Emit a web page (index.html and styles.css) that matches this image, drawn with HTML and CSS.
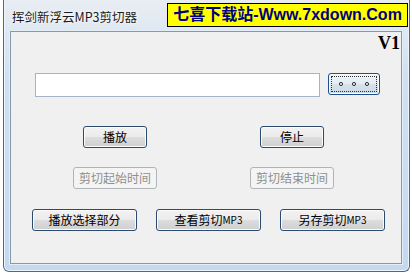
FILE: index.html
```html
<!DOCTYPE html>
<html lang="zh">
<head>
<meta charset="utf-8">
<title>挥剑新浮云MP3剪切器</title>
<link rel="stylesheet" href="styles.css">
</head>
<body>
<div class="window">
  <div class="titlebar">
    <span class="title">挥剑新浮云MP3剪切器</span>
    <span class="ad">七喜下载站-Www.7xdown.Com</span>
  </div>
  <div class="client">
    <div class="ver">V1</div>
    <div class="row file-row">
      <input class="path" type="text" value="">
      <button class="btn browse focused"><svg width="32" height="6" viewBox="0 0 32 6"><circle cx="3" cy="3" r="1.6" fill="none" stroke="#333" stroke-width="1"/><circle cx="16" cy="3" r="1.6" fill="none" stroke="#333" stroke-width="1"/><circle cx="29" cy="3" r="1.6" fill="none" stroke="#333" stroke-width="1"/></svg></button>
    </div>
    <div class="row play-row">
      <button class="btn small">播放</button>
      <button class="btn small">停止</button>
    </div>
    <div class="row time-row">
      <button class="btn mid" disabled>剪切起始时间</button>
      <button class="btn mid" disabled>剪切结束时间</button>
    </div>
    <div class="row action-row">
      <button class="btn wide">播放选择部分</button>
      <button class="btn wide">查看剪切<span class="mp">MP3</span></button>
      <button class="btn wide">另存剪切<span class="mp">MP3</span></button>
    </div>
  </div>
</div>
</body>
</html>
```

FILE: styles.css
```css
* { box-sizing: border-box; }
html, body {
  margin: 0;
  padding: 0;
  background: #ffffff;
  width: 412px;
  height: 274px;
  overflow: hidden;
  font-family: "Noto Sans CJK SC", "Liberation Sans", sans-serif;
}
.window {
  margin-left: 3px;
  width: 407px;
  height: 272px;
  border: 1px solid #5a6573;
  border-top: none;
  border-radius: 0 0 6px 6px;
  background: linear-gradient(to bottom, #e8edf3 0px, #dfe8f2 30px, #cfe0f3 80px, #c3d9f1 100%);
  padding: 0 7px 7px 6px;
  display: flex;
  flex-direction: column;
  box-shadow: inset 1px 0 0 #eef5fc, inset -1px 0 0 #eef5fc, inset 0 -1px 0 #eef5fc;
}
.titlebar {
  height: 31px;
  display: flex;
  align-items: flex-start;
  margin-right: -6px;
}
.title {
  margin-top: 9px;
  margin-left: 2px;
  font-size: 12.5px;
  line-height: 16px;
  color: #1a1a1a;
  text-shadow: 0 0 4px #ffffff, 0 0 2px #ffffff;
}
.ad {
  margin-left: auto;
  margin-top: 3px;
  width: 241px;
  height: 24px;
  background: #ffff00;
  border: 1px solid #000000;
  color: #000080;
  font-family: "Liberation Sans", "Noto Sans CJK SC", sans-serif;
  font-weight: bold;
  font-size: 16px;
  line-height: 22px;
  text-align: center;
  white-space: nowrap;
}
.client {
  width: 392px;
  height: 233px;
  border: 1px solid #8798ab;
  background: #f0f0f0;
  display: flex;
  flex-direction: column;
  box-shadow: 0 0 0 1px #e4eef9;
}
.ver {
  height: 20px;
  padding-right: 1px;
  text-align: right;
  font-family: "Liberation Serif", serif;
  font-weight: bold;
  font-size: 18px;
  line-height: 22px;
  color: #000;
}
.row {
  display: flex;
  align-items: flex-start;
}
.file-row { margin-top: 21px; padding-left: 24px; }
.play-row { margin-top: 29px; padding-left: 72px; gap: 113px; }
.time-row { margin-top: 19px; padding-left: 62px; gap: 93px; }
.action-row { margin-top: 20px; padding-left: 21px; gap: 19px; }
.path {
  width: 285px;
  height: 24px;
  margin: 0;
  border: 1px solid #a5b4c6;
  background: #ffffff;
  outline: none;
  padding: 0 3px;
}
.btn {
  height: 22px;
  margin: 0;
  padding: 0;
  border: 1px solid #2b4a70;
  border-radius: 3px;
  background: linear-gradient(to bottom, #f2f2f2 0%, #ebebeb 50%, #dddddd 51%, #cfcfcf 100%);
  box-shadow: inset 0 0 0 1px #fcfcfc;
  font-family: "Noto Sans CJK SC", "Liberation Sans", sans-serif;
  font-size: 12px;
  line-height: 18px;
  color: #000;
  display: flex;
  align-items: center;
  justify-content: center;
}
.btn:disabled {
  border-color: #b0b5b9;
  background: #f4f4f4;
  box-shadow: none;
  color: #8e8f8f;
}
.mp { font-size: 10px; letter-spacing: 0; }
.browse {
  margin-left: 8px;
  width: 52px;
  position: relative;
  border-color: #1d4f8a;
  background: linear-gradient(to bottom, #eef4f9 0%, #e4ecf3 50%, #d7e2ec 51%, #cbd8e4 100%);
}
.browse::after {
  content: "";
  position: absolute;
  left: 2px; top: 2px; right: 2px; bottom: 2px;
  border: 1px dotted #333;
}
.small { width: 64px; }
.mid { width: 84px; }
.wide { width: 105px; }
```
